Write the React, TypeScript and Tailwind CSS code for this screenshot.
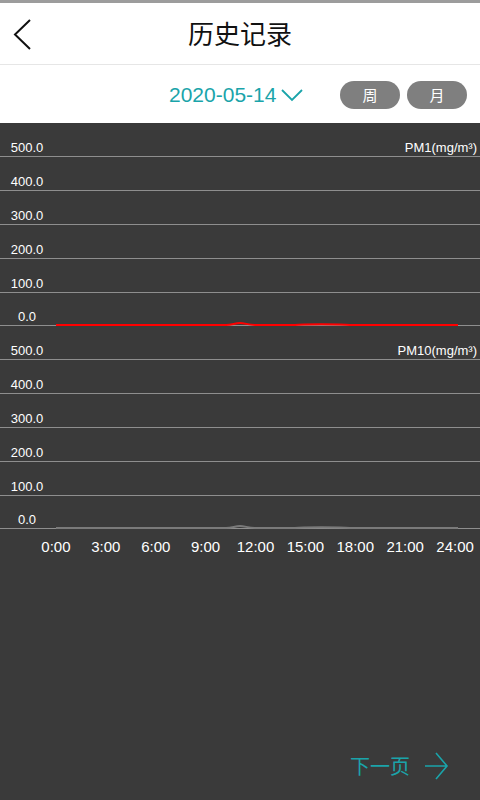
import React from 'react';

const levels = ['500.0', '400.0', '300.0', '200.0', '100.0', '0.0'];
const hours = ['0:00', '3:00', '6:00', '9:00', '12:00', '15:00', '18:00', '21:00', '24:00'];

const sans = "font-['Liberation_Sans','Noto_Sans_CJK_SC',sans-serif]";

function Chart({ unit, color }: { unit: string; color: string }) {
  return (
    <div className="relative">
      {levels.map((v, i) => (
        <div
          key={v}
          className={`flex items-end justify-between border-b border-[#8e8e8e] pb-[1px] pl-[10px] pr-[3px] text-[13px] leading-[14px] text-white ${i === 5 ? 'h-[33px]' : 'h-[34px]'}`}
        >
          <span className="w-[34px] text-center">{v}</span>
          {i === 0 && <span>{unit}</span>}
        </div>
      ))}
      {/* data line drawn over the zero line */}
      <svg className="absolute bottom-0 left-0" width="480" height="12" viewBox="0 0 480 12">
        <path
          d="M56 11 L226 11 C232 11 235 9 240 9 C245 9 248 11 255 11 L295 11 C302 10 340 10 350 11 L458 11"
          fill="none"
          stroke={color}
          strokeWidth="2"
        />
      </svg>
    </div>
  );
}

export default function App() {
  return (
    <div className={`flex min-h-screen w-[480px] flex-col bg-[#3a3a3a] ${sans}`}>
      <div className="h-[3px] bg-[#9c9c9c]" />
      {/* header */}
      <div className="relative flex h-[62px] items-center justify-center border-b border-[#e6e6e6] bg-white pb-[2px]">
        <svg className="absolute left-[12px] top-[15px]" width="22" height="32" viewBox="0 0 22 32">
          <path d="M18 2 L3 16.5 L18 31" fill="none" stroke="#111" strokeWidth="2" />
        </svg>
        <span className="text-[26px] text-[#111] font-['Noto_Sans_CJK_SC',sans-serif]">历史记录</span>
      </div>
      {/* date row */}
      <div className="flex h-[58px] items-center bg-white pl-[169px] pr-[13px] pt-[2px]">
        <span className="text-[21px] text-[#1aa4aa]">2020-05-14</span>
        <svg className="ml-[5px]" width="22" height="14" viewBox="0 0 22 14">
          <path d="M1 2 L11 12 L21 2" fill="none" stroke="#1aa4aa" strokeWidth="1.8" />
        </svg>
        <div className="ml-auto flex gap-[7px]">
          <div className="flex h-[28px] w-[60px] items-center justify-center rounded-full bg-[#7f7f7f] text-[15px] text-white font-['Noto_Sans_CJK_SC',sans-serif]">周</div>
          <div className="flex h-[28px] w-[60px] items-center justify-center rounded-full bg-[#7f7f7f] text-[15px] text-white font-['Noto_Sans_CJK_SC',sans-serif]">月</div>
        </div>
      </div>
      {/* charts */}
      <Chart unit="PM1(mg/m³)" color="#ff0000" />
      <Chart unit="PM10(mg/m³)" color="#7a7a7a" />
      <div className="flex pl-[31px] pt-[7px] text-[15px] text-white">
        {hours.map((h) => (
          <span key={h} className="w-[50.25px] text-center">{h}</span>
        ))}
      </div>
      {/* next page */}
      <div className="mt-auto flex items-center justify-end pb-[20px] pr-[31px]">
        <span className="text-[20px] leading-[28px] text-[#1aa4aa] font-['Noto_Sans_CJK_SC',sans-serif]">下一页</span>
        <svg className="ml-[14px]" width="25" height="28" viewBox="0 0 25 28">
          <path d="M1 14 L23 14 M12 1 L23 14 L12 27" fill="none" stroke="#1aa4aa" strokeWidth="1.6" />
        </svg>
      </div>
    </div>
  );
}
